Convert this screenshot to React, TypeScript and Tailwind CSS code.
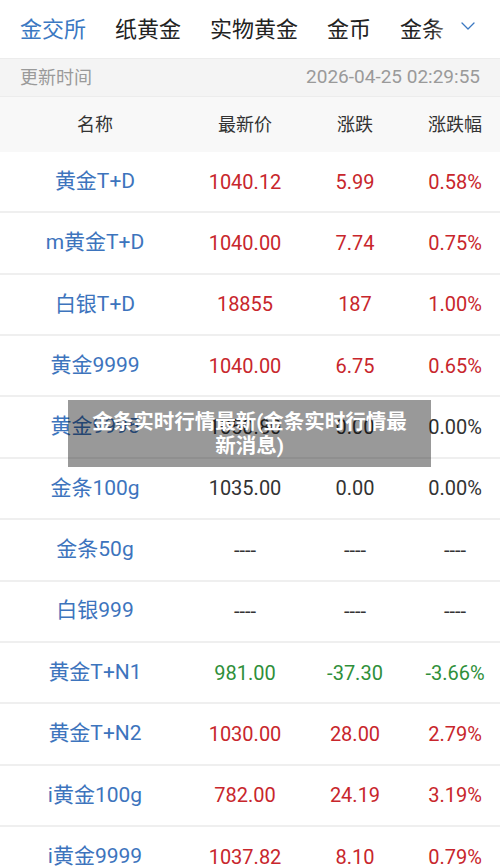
import { ChevronDown } from "lucide-react";
import { FC } from "react";

type Row = {
  name: string;
  price: string;
  change: string;
  pct: string;
  tone: "up" | "down" | "flat" | "none";
};

const rows: Row[] = [
  { name: "黄金T+D", price: "1040.12", change: "5.99", pct: "0.58%", tone: "up" },
  { name: "m黄金T+D", price: "1040.00", change: "7.74", pct: "0.75%", tone: "up" },
  { name: "白银T+D", price: "18855", change: "187", pct: "1.00%", tone: "up" },
  { name: "黄金9999", price: "1040.00", change: "6.75", pct: "0.65%", tone: "up" },
  { name: "黄金9995", price: "1050.80", change: "0.00", pct: "0.00%", tone: "flat" },
  { name: "金条100g", price: "1035.00", change: "0.00", pct: "0.00%", tone: "flat" },
  { name: "金条50g", price: "----", change: "----", pct: "----", tone: "none" },
  { name: "白银999", price: "----", change: "----", pct: "----", tone: "none" },
  { name: "黄金T+N1", price: "981.00", change: "-37.30", pct: "-3.66%", tone: "down" },
  { name: "黄金T+N2", price: "1030.00", change: "28.00", pct: "2.79%", tone: "up" },
  { name: "i黄金100g", price: "782.00", change: "24.19", pct: "3.19%", tone: "up" },
  { name: "i黄金9999", price: "1037.82", change: "8.10", pct: "0.79%", tone: "up" },
];

const tabs = ["金交所", "纸黄金", "实物黄金", "金币", "金条"];

const font = "font-['Roboto','Noto_Sans_CJK_SC',sans-serif]";

export default function App() {
  return (
    <div className={`relative w-[500px] h-[867px] overflow-hidden bg-white ${font}`}>
      <TabBar />
      <div className="h-[39px] flex items-center justify-between px-5 bg-[#f4f4f4] border-y border-[#ececec] text-[#9a9a9a]">
        <span className="text-[18px]">更新时间</span>
        <span className="text-[19px]">2026-04-25 02:29:55</span>
      </div>
      <div className="h-[55px] flex items-center bg-[#f8f8f8] text-[18px] text-[#333]">
        <div className="w-[190px] text-center">名称</div>
        <div className="w-[110px] text-center">最新价</div>
        <div className="w-[110px] text-center">涨跌</div>
        <div className="w-[90px] text-center">涨跌幅</div>
      </div>
      {rows.map((r) => (
        <QuoteRow key={r.name} row={r} />
      ))}
      <div className="absolute left-[68px] top-[400px] w-[363px] h-[67px] bg-black/40 flex items-center justify-center">
        <p className="w-[335px] text-white font-bold text-[20.5px] leading-[24px] text-center">
          金条实时行情最新(金条实时行情最新消息)
        </p>
      </div>
    </div>
  );
}

const TabBar: FC = () => {
  return (
    <div className="relative h-[58px] flex items-center pl-5 text-[22px]">
      <div className="flex gap-[29px] whitespace-nowrap">
        {tabs.map((t, i) => (
          <span key={t} className={i === 0 ? "text-[#3b78c2]" : "text-[#222]"}>
            {t}
          </span>
        ))}
      </div>
      <div className="absolute right-0 top-0 h-full w-[70px] bg-gradient-to-r from-white/0 via-white/80 to-white" />
      <ChevronDown className="absolute right-[20px] top-[14px] w-[24px] h-[24px] text-[#3b78c2]" strokeWidth={1.3} />
    </div>
  );
};

const QuoteRow: FC<{ row: Row }> = ({ row }) => {
  const color =
    row.tone === "up"
      ? "text-[#c8262c]"
      : row.tone === "down"
        ? "text-[#2f8f3a]"
        : "text-[#333]";
  return (
    <div className="h-[61.36px] flex items-center border-b-2 border-[#efefef] text-[20px]">
      <div className="w-[190px] text-center text-[21px] text-[#3d74bd]">{row.name}</div>
      <div className={`w-[110px] text-center ${color}`}>{row.price}</div>
      <div className={`w-[110px] text-center ${color}`}>{row.change}</div>
      <div className={`w-[90px] text-center ${color}`}>{row.pct}</div>
    </div>
  );
};
